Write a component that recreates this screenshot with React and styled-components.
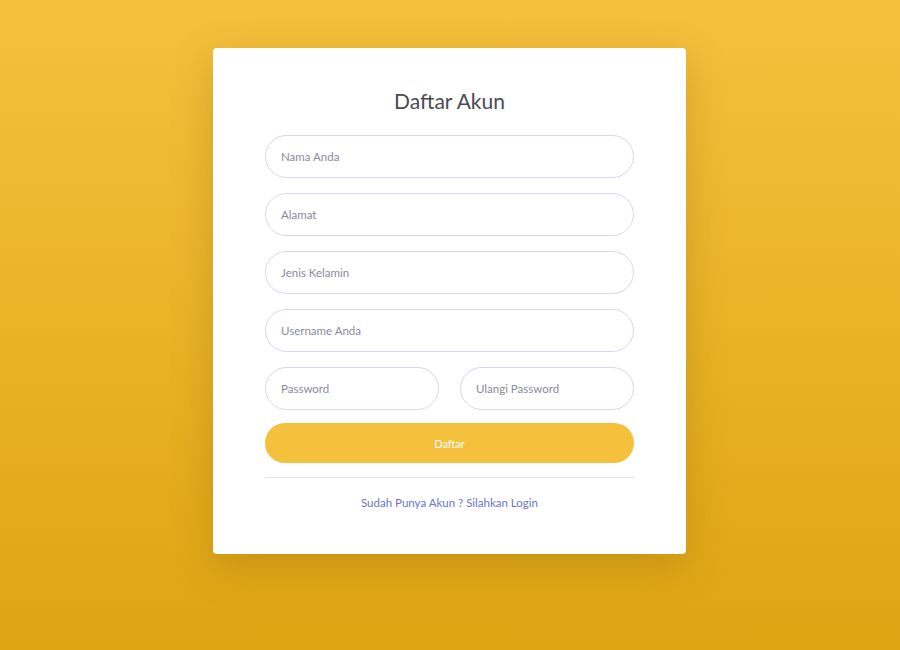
import React from "react";
import styled, { createGlobalStyle } from "styled-components";

const GlobalStyle = createGlobalStyle`
  html, body {
    margin: 0;
    padding: 0;
  }
  body {
    font-family: "Lato", "Noto Sans", sans-serif;
  }
`;

const Page = styled.div`
  width: 100%;
  min-height: 650px;
  display: flex;
  justify-content: center;
  align-items: flex-start;
  padding: 48px 1px 0 0;
  box-sizing: border-box;
  background: linear-gradient(to bottom, #f5c13d 0%, #dea412 100%);
`;

const Card = styled.form`
  width: 473px;
  height: 506px;
  box-sizing: border-box;
  background: #fff;
  border-radius: 4px;
  box-shadow: 0 12px 40px rgba(120, 80, 0, 0.25);
  padding: 40px 52px 0;
  display: flex;
  flex-direction: column;
  & > * {
    flex-shrink: 0;
  }
`;

const Title = styled.h2`
  margin: 0 0 21px;
  text-align: center;
  font-weight: 400;
  font-size: 21px;
  line-height: 26px;
  color: #4a4a55;
`;

const Fields = styled.div`
  display: flex;
  flex-direction: column;
  gap: 15px;
`;

const Row = styled.div`
  display: grid;
  grid-template-columns: 1fr 1fr;
  gap: 21px;
`;

const Input = styled.input`
  width: 100%;
  height: 43px;
  box-sizing: border-box;
  border: 1.5px solid #d6d6ec;
  border-radius: 22px;
  padding: 0 15px;
  font-family: "Lato", "Noto Sans", sans-serif;
  font-size: 11.5px;
  color: #555;
  outline: none;
  background: #fff;
  &::placeholder {
    color: #8a8a9c;
  }
`;

const Button = styled.button`
  margin-top: 13px;
  height: 40px;
  border: none;
  border-radius: 20px;
  background: #f5c13d;
  color: #fff;
  font-family: "Lato", "Noto Sans", sans-serif;
  font-size: 11px;
  cursor: pointer;
`;

const Divider = styled.hr`
  margin: 14px 0 0;
  border: none;
  border-top: 1px solid #e3e3e8;
`;

const LoginLink = styled.a`
  margin-top: 18px;
  text-align: center;
  font-size: 11.5px;
  color: #6a72d4;
  text-decoration: none;
`;

export default function App() {
  return (
    <>
      <GlobalStyle />
      <Page>
        <Card onSubmit={(e) => e.preventDefault()}>
          <Title>Daftar Akun</Title>
          <Fields>
            <Input placeholder="Nama Anda" />
            <Input placeholder="Alamat" />
            <Input placeholder="Jenis Kelamin" />
            <Input placeholder="Username Anda" />
            <Row>
              <Input type="password" placeholder="Password" />
              <Input type="password" placeholder="Ulangi Password" />
            </Row>
          </Fields>
          <Button type="submit">Daftar</Button>
          <Divider />
          <LoginLink href="#">Sudah Punya Akun ? Silahkan Login</LoginLink>
        </Card>
      </Page>
    </>
  );
}
